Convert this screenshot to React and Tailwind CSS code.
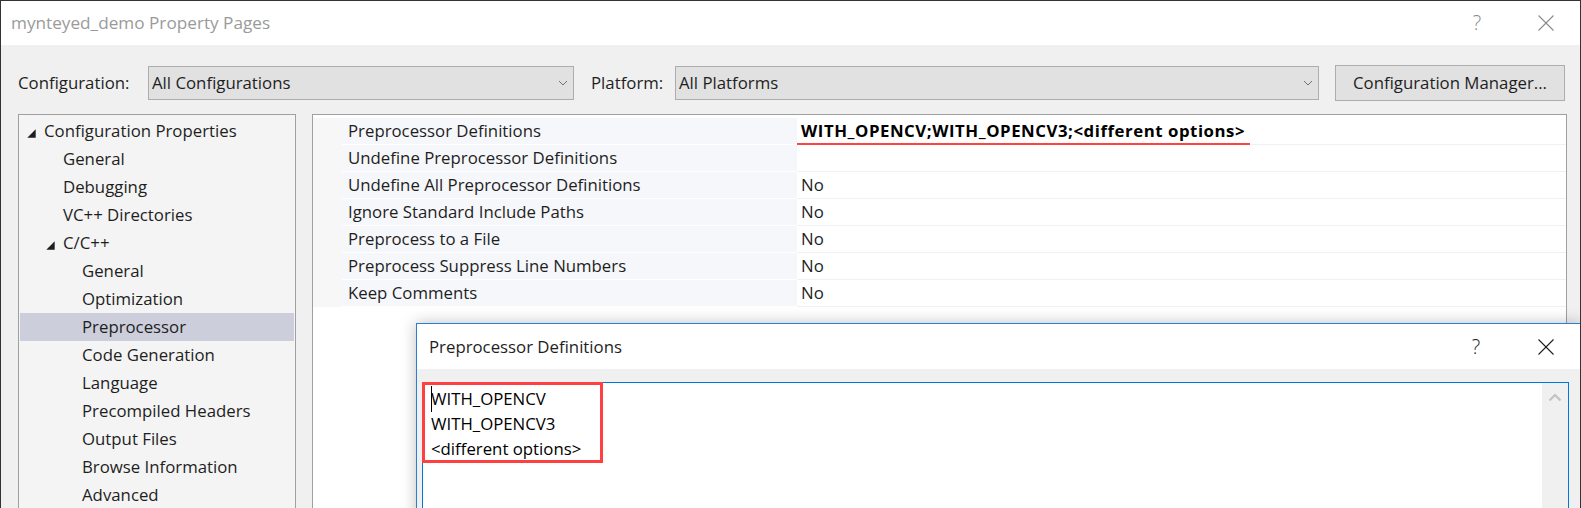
import React from "react";

const tree = [
  { label: "Configuration Properties", level: 0, exp: true },
  { label: "General", level: 1 },
  { label: "Debugging", level: 1 },
  { label: "VC++ Directories", level: 1 },
  { label: "C/C++", level: 1, exp: true },
  { label: "General", level: 2 },
  { label: "Optimization", level: 2 },
  { label: "Preprocessor", level: 2, sel: true },
  { label: "Code Generation", level: 2 },
  { label: "Language", level: 2 },
  { label: "Precompiled Headers", level: 2 },
  { label: "Output Files", level: 2 },
  { label: "Browse Information", level: 2 },
  { label: "Advanced", level: 2 },
];

const props = [
  ["Preprocessor Definitions", "WITH_OPENCV;WITH_OPENCV3;<different options>", true],
  ["Undefine Preprocessor Definitions", ""],
  ["Undefine All Preprocessor Definitions", "No"],
  ["Ignore Standard Include Paths", "No"],
  ["Preprocess to a File", "No"],
  ["Preprocess Suppress Line Numbers", "No"],
  ["Keep Comments", "No"],
];

function Tri() {
  return (
    <svg width="9" height="9" viewBox="0 0 9 9" className="mt-[5px] shrink-0">
      <polygon points="8.7,0.3 8.7,8.7 0.3,8.7" fill="#1e1e1e" />
    </svg>
  );
}

function Chevron() {
  return (
    <svg width="10" height="6" viewBox="0 0 10 6">
      <polyline points="1,1 5,5 9,1" fill="none" stroke="#707070" strokeWidth="1" />
    </svg>
  );
}

function XIcon({ color }) {
  return (
    <svg width="16" height="16" viewBox="0 0 16 16">
      <line x1="0.5" y1="0.5" x2="15.5" y2="15.5" stroke={color} strokeWidth="1.1" />
      <line x1="15.5" y1="0.5" x2="0.5" y2="15.5" stroke={color} strokeWidth="1.1" />
    </svg>
  );
}

function TreeRow({ item }) {
  const base = "h-[28px] mx-[1px] flex items-center whitespace-nowrap";
  const sel = item.sel ? " bg-[#cccedb]" : "";
  if (item.level === 0) {
    return (
      <div className={base + sel + " pl-[7px]"}>
        <Tri />
        <span className="ml-[8px]">{item.label}</span>
      </div>
    );
  }
  if (item.level === 1 && item.exp) {
    return (
      <div className={base + sel + " pl-[26px]"}>
        <Tri />
        <span className="ml-[8px]">{item.label}</span>
      </div>
    );
  }
  if (item.level === 1) {
    return <div className={base + sel + " pl-[43px]"}>{item.label}</div>;
  }
  return <div className={base + sel + " pl-[62px]"}>{item.label}</div>;
}

export default function App() {
  return (
    <div className="relative w-[1581px] h-[508px] overflow-hidden bg-[#f0f0f0] border-l border-t border-r border-[#333333] font-['Open_Sans',sans-serif] text-[16.8px] text-[#1e1e1e]">
      {/* title bar */}
      <div className="h-[44px] bg-white flex items-center justify-between">
        <div className="pl-[10px] text-[#9a9a9a] text-[17.2px]">mynteyed_demo Property Pages</div>
        <div className="flex items-center mr-[11px]">
          <div className="w-[46px] text-center text-[#8a8a8a] text-[20px] font-light">?</div>
          <div className="w-[46px] ml-[23px] flex justify-center">
            <XIcon color="#8a8a8a" />
          </div>
        </div>
      </div>

      {/* configuration row */}
      <div className="mt-[20px] h-[36px] flex items-center pl-[17px]">
        <div className="w-[130px]">Configuration:</div>
        <div className="w-[426px] h-[34px] bg-[#e1e1e1] border border-[#adadad] flex items-center justify-between pl-[3px] pr-[5px]">
          <span>All Configurations</span>
          <Chevron />
        </div>
        <div className="ml-[17px] w-[84px]">Platform:</div>
        <div className="w-[644px] h-[34px] bg-[#e1e1e1] border border-[#adadad] flex items-center justify-between pl-[3px] pr-[5px]">
          <span>All Platforms</span>
          <Chevron />
        </div>
        <div className="ml-[16px] w-[230px] h-[36px] bg-[#e1e1e1] border border-[#adadad] flex items-center justify-center">
          Configuration Manager...
        </div>
      </div>

      {/* panels */}
      <div className="mt-[13px] flex pl-[17px]">
        <div className="w-[278px] h-[420px] border border-[#a0a0a0] bg-[#f4f4f4] pt-[2px]">
          {tree.map((t, i) => (
            <TreeRow key={i} item={t} />
          ))}
        </div>
        <div className="ml-[16px] w-[1255px] h-[420px] border border-[#a0a0a0] bg-white pt-[3px]">
          {props.map(([name, val, bold], i) => (
            <div key={i} className="flex h-[27px]">
              <div className="w-[29px] bg-[#f7f7f7]" />
              <div className="w-[455px] bg-[#f6f7fb] border-b border-white flex items-center pl-[6px] whitespace-nowrap">
                {name}
              </div>
              <div className="relative flex-1 bg-white border-b border-[#f0f0f5] flex items-center pl-[4px] whitespace-nowrap">
                <span className={bold ? "font-bold text-black tracking-[0.55px]" : ""}>{val}</span>
                {bold && (
                  <div className="absolute left-0 bottom-[-2px] w-[453px] h-[3px] bg-[#ff4343]" />
                )}
              </div>
            </div>
          ))}
        </div>
      </div>

      {/* overlay dialog */}
      <div className="absolute left-[415px] top-[322px] w-[1165px] h-[240px] border border-[#2a7fd4] bg-[#f0f0f0] shadow-[0_0_14px_rgba(0,0,0,0.25)]">
        <div className="h-[45px] bg-white flex items-center justify-between">
          <div className="pl-[12px]">Preprocessor Definitions</div>
          <div className="flex items-center mr-[11px]">
            <div className="w-[46px] text-center text-[#1e1e1e] text-[20px] font-light">?</div>
            <div className="w-[46px] ml-[24px] flex justify-center">
              <XIcon color="#1e1e1e" />
            </div>
          </div>
        </div>
        <div className="mt-[13px] ml-[5px] mr-[11px] h-[200px] bg-white border border-[#0078d7] flex">
          <div className="relative flex-1 pl-[8px] pt-[3px] leading-[25px] text-black">
            <div className="relative">
              <span className="absolute left-0 top-[0px] w-px h-[26px] bg-black" />
              WITH_OPENCV
            </div>
            <div>WITH_OPENCV3</div>
            <div>&lt;different options&gt;</div>
            <div className="absolute left-[-1px] top-[-1px] w-[181px] h-[81px] border-[3px] border-[#ff4040]" />
          </div>
          <div className="w-[26px] bg-[#f0f0f0] flex justify-center pt-[10px]">
            <svg width="14" height="9" viewBox="0 0 14 9">
              <polyline points="1.5,7.5 7,2 12.5,7.5" fill="none" stroke="#c2c2c2" strokeWidth="2.2" />
            </svg>
          </div>
        </div>
      </div>
    </div>
  );
}
